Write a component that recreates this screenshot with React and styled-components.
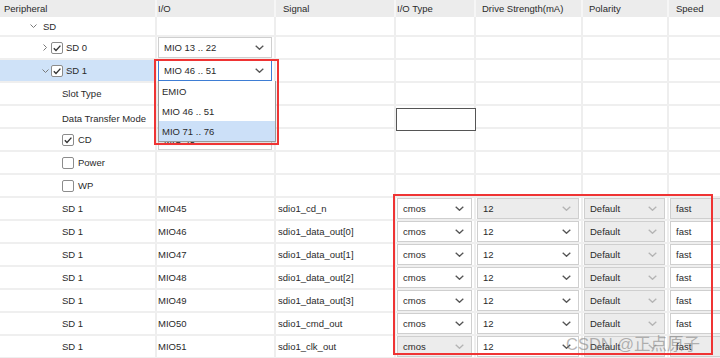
import React from "react";
import styled, { createGlobalStyle } from "styled-components";

const GlobalStyle = createGlobalStyle`
  html, body { margin: 0; padding: 0; background: #fff; }
  body {
    font-family: "Liberation Sans", Arial, sans-serif;
    font-size: 9.5px;
    color: #2a2a2a;
  }
`;

const COLS = "157px 119px 120px 80px 107px 86px 90px";

const Page = styled.div`
  position: relative;
  width: 720px;
  height: 358px;
  overflow: hidden;
`;

const Row = styled.div`
  display: grid;
  grid-template-columns: ${COLS};
  height: ${(p) => p.$h || 23}px;
  box-sizing: border-box;
  border-bottom: 2px solid #efefef;
`;

const HeaderRow = styled(Row)`
  background: #ececec;
  border-bottom: none;
`;

const Cell = styled.div`
  position: relative;
  box-sizing: border-box;
  display: flex;
  align-items: center;
  padding-left: ${(p) => p.$pad ?? 2}px;
  padding-right: 2px;
  border-right: 2px solid ${(p) => (p.$head ? "#f6f6f6" : "#eeeeee")};
  background: ${(p) => p.$bg || "transparent"};
  white-space: nowrap;
`;

const ComboCell = styled(Cell)`
  padding: 0 2px 0 1px;
`;

const Tree = styled.div`
  display: flex;
  align-items: center;
  padding-left: ${(p) => p.$indent}px;
`;

const Expander = styled.span`
  width: 8px;
  margin-right: ${(p) => p.$gap}px;
  display: inline-flex;
  align-items: center;
  justify-content: center;
`;

const Box = styled.span`
  box-sizing: border-box;
  width: 12px;
  height: 12px;
  margin-right: ${(p) => p.$gap ?? 3}px;
  border: 1px solid #8c8c8c;
  border-radius: 2px;
  background: #fff;
  display: inline-flex;
  align-items: center;
  justify-content: center;
`;

const Combo = styled.div`
  box-sizing: border-box;
  width: 100%;
  height: 21px;
  display: flex;
  align-items: center;
  justify-content: space-between;
  padding: 0 7px 0 5px;
  background: ${(p) => (p.$disabled ? "#ececec" : "#fff")};
  border: 1px solid ${(p) => (p.$focus ? "#3f7ed6" : "#cfcfcf")};
`;

const EmptyBox = styled.div`
  box-sizing: border-box;
  flex: none;
  width: 80px;
  height: 23px;
  margin-top: 2px;
  border: 1px solid #555;
  background: #fff;
  z-index: 1;
`;

const Dropdown = styled.div`
  position: absolute;
  top: 100%;
  left: 1px;
  width: 118px;
  z-index: 5;
  box-sizing: border-box;
  background: #fff;
  border: 1px solid #9a9a9a;
  border-top: none;
  box-shadow: 0 2px 3px rgba(0, 0, 0, 0.15);
`;

const Option = styled.div`
  height: 20px;
  display: flex;
  align-items: center;
  padding-left: 3px;
  background: ${(p) => (p.$selected ? "#cce0f8" : "#fff")};
`;

const Mark = styled.div`
  position: absolute;
  left: ${(p) => p.$x}px;
  top: ${(p) => p.$y}px;
  width: ${(p) => p.$w}px;
  height: ${(p) => p.$h}px;
  box-sizing: border-box;
  border: 2px solid #ef3434;
  z-index: 8;
  pointer-events: none;
`;

const Watermark = styled.div`
  position: absolute;
  left: 566px;
  top: 331px;
  z-index: 9;
  font-family: "Liberation Sans", "Noto Sans CJK SC", sans-serif;
  font-size: 16.5px;
  color: rgba(120, 120, 120, 0.55);
  white-space: nowrap;
`;

const DownSmall = () => (
  <svg width="7" height="4" viewBox="0 0 7 4">
    <path d="M0.5 0.5 L3.5 3.5 L6.5 0.5" fill="none" stroke="#7a7a7a" strokeWidth="1" />
  </svg>
);

const RightSmall = () => (
  <svg width="4" height="7" viewBox="0 0 4 7">
    <path d="M0.5 0.5 L3.5 3.5 L0.5 6.5" fill="none" stroke="#7a7a7a" strokeWidth="1" />
  </svg>
);

const Tick = () => (
  <svg width="10" height="10" viewBox="0 0 10 10">
    <path d="M1.8 5.2 L4 7.4 L8.4 2.6" fill="none" stroke="#333" strokeWidth="1.4" />
  </svg>
);

const Chevron = ({ disabled }) => (
  <svg width="9" height="5" viewBox="0 0 9 5">
    <path
      d="M0.7 0.7 L4.5 4.3 L8.3 0.7"
      fill="none"
      stroke={disabled ? "#b4b4b4" : "#555"}
      strokeWidth="1.3"
    />
  </svg>
);

const Select = ({ value, disabled, focus }) => (
  <Combo $disabled={disabled} $focus={focus}>
    <span>{value}</span>
    <Chevron disabled={disabled} />
  </Combo>
);

const headers = [
  ["Peripheral", 4],
  ["I/O", 1],
  ["Signal", 7],
  ["I/O Type", 1],
  ["Drive Strength(mA)", 6],
  ["Polarity", 6],
  ["Speed", 7],
];

const pins = [
  { mio: "MIO45", sig: "sdio1_cd_n", type: true, drive: false, speed: false },
  { mio: "MIO46", sig: "sdio1_data_out[0]", type: true, drive: true, speed: true },
  { mio: "MIO47", sig: "sdio1_data_out[1]", type: true, drive: true, speed: true },
  { mio: "MIO48", sig: "sdio1_data_out[2]", type: true, drive: true, speed: true },
  { mio: "MIO49", sig: "sdio1_data_out[3]", type: true, drive: true, speed: true },
  { mio: "MIO50", sig: "sdio1_cmd_out", type: true, drive: true, speed: true },
  { mio: "MIO51", sig: "sdio1_clk_out", type: false, drive: true, speed: false },
];

const EmptyCells = ({ from = 0 }) =>
  Array.from({ length: 7 - from }).map((_, i) => <Cell key={i} />);

const OptionRow = ({ label, checked, extra }) => (
  <Row>
    <Cell>
      <Tree $indent={60}>
        {checked !== undefined && <Box $gap={4}>{checked && <Tick />}</Box>}
        {label}
      </Tree>
    </Cell>
    {extra}
  </Row>
);

export default function App() {
  return (
    <Page>
      <GlobalStyle />
      <HeaderRow $h={17}>
        {headers.map(([h, pad]) => (
          <Cell key={h} $head $pad={pad}>
            {h}
          </Cell>
        ))}
      </HeaderRow>

      <Row $h={20}>
        <Cell>
          <Tree $indent={27}>
            <Expander $gap={6}>
              <DownSmall />
            </Expander>
            SD
          </Tree>
        </Cell>
        <EmptyCells from={1} />
      </Row>

      <Row>
        <Cell>
          <Tree $indent={39}>
            <Expander $gap={2}>
              <RightSmall />
            </Expander>
            <Box>
              <Tick />
            </Box>
            SD 0
          </Tree>
        </Cell>
        <ComboCell>
          <Select value="MIO 13 .. 22" />
        </ComboCell>
        <EmptyCells from={2} />
      </Row>

      <Row>
        <Cell $bg="#cfe2f8">
          <Tree $indent={39}>
            <Expander $gap={2}>
              <DownSmall />
            </Expander>
            <Box>
              <Tick />
            </Box>
            SD 1
          </Tree>
        </Cell>
        <ComboCell>
          <Select value="MIO 46 .. 51" focus />
          <Dropdown>
            <Option>EMIO</Option>
            <Option>MIO 46 .. 51</Option>
            <Option $selected>MIO 71 .. 76</Option>
          </Dropdown>
        </ComboCell>
        <EmptyCells from={2} />
      </Row>

      <OptionRow label="Slot Type" extra={<EmptyCells from={1} />} />
      <OptionRow
        label="Data Transfer Mode"
        extra={
          <>
            <Cell />
            <Cell />
            <Cell $pad={0}>
              <EmptyBox />
            </Cell>
            <Cell />
            <Cell />
            <Cell />
          </>
        }
      />
      <OptionRow
        label="CD"
        checked
        extra={
          <>
            <ComboCell>
              <Select value="MIO 45" />
            </ComboCell>
            <EmptyCells from={2} />
          </>
        }
      />
      <OptionRow label="Power" checked={false} extra={<EmptyCells from={1} />} />
      <OptionRow label="WP" checked={false} extra={<EmptyCells from={1} />} />

      {pins.map((p) => (
        <Row key={p.mio}>
          <Cell $pad={62}>SD 1</Cell>
          <Cell $pad={1}>{p.mio}</Cell>
          <Cell $pad={2}>{p.sig}</Cell>
          <ComboCell>
            <Select value="cmos" disabled={!p.type} />
          </ComboCell>
          <ComboCell>
            <Select value="12" disabled={!p.drive} />
          </ComboCell>
          <ComboCell>
            <Select value="Default" disabled />
          </ComboCell>
          <ComboCell>
            <Select value="fast" disabled={!p.speed} />
          </ComboCell>
        </Row>
      ))}

      <Mark $x={154} $y={59} $w={125} $h={86} />
      <Mark $x={393} $y={194} $w={320} $h={161} />
      <Watermark>CSDN @正点原子</Watermark>
    </Page>
  );
}
